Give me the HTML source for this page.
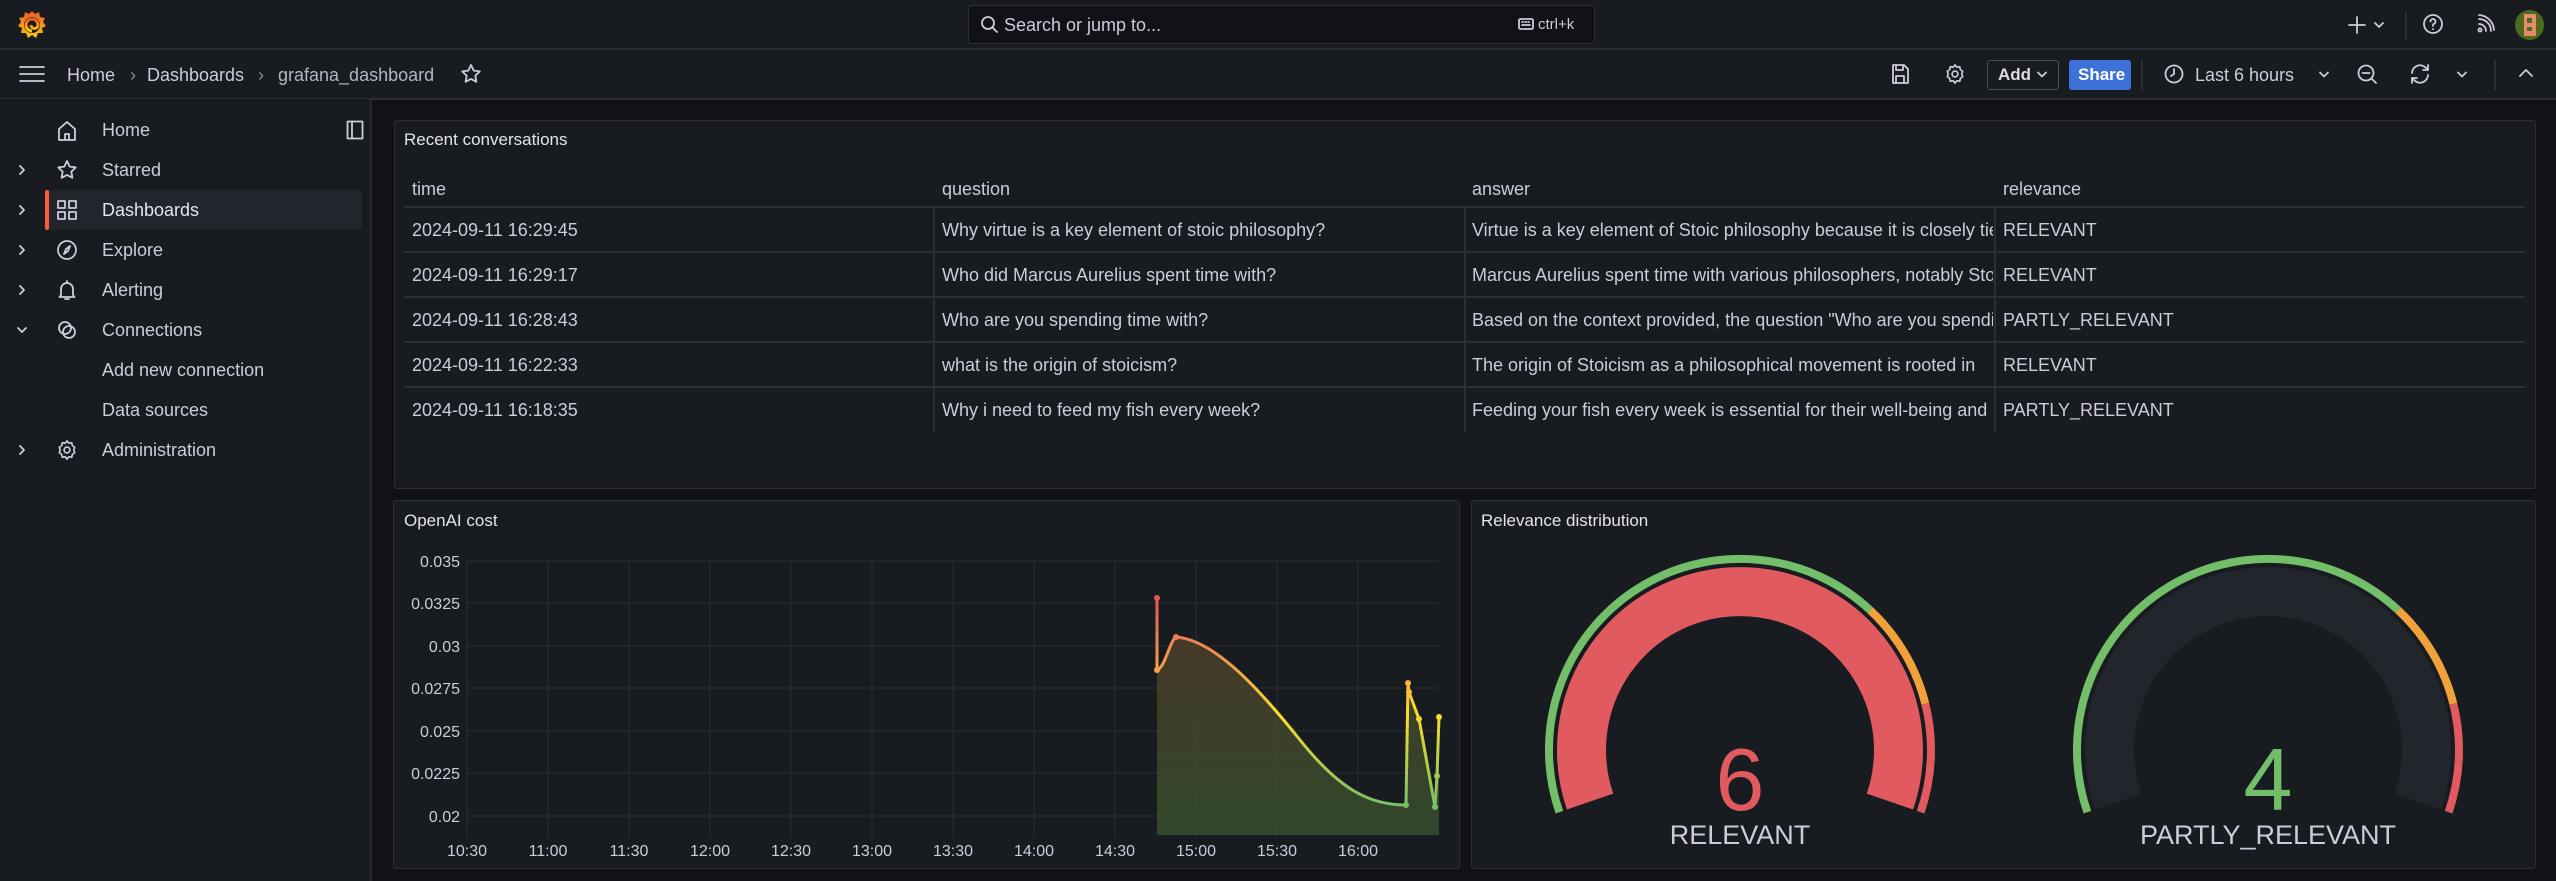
<!DOCTYPE html>
<html><head><meta charset="utf-8">
<style>
*{margin:0;padding:0;box-sizing:border-box}
body{width:2556px;height:881px;background:#111217;font-family:"Liberation Sans",sans-serif;color:#ccccdc;position:relative;overflow:hidden}
.a{position:absolute}
.bar{background:#181b1f;border-bottom:2px solid #2a2d33;left:0;width:2556px}
.t{position:absolute;white-space:nowrap;font-size:18px;line-height:20px}
.side{left:0;top:99px;width:372px;height:782px;background:#181b1f;border-right:2px solid #25282d}
.panel{background:#181b1f;border:1.5px solid #2c3036;border-radius:3px}
svg{position:absolute;overflow:visible}
.ic{stroke:#ccccdc;fill:none;stroke-width:1.8;stroke-linecap:round;stroke-linejoin:round}
.hr{position:absolute;height:1.5px;background:#2c3036}
.vr{position:absolute;width:1.5px;background:#2c3036}
</style></head><body>
<div class="a bar" style="top:0;height:50px"></div>
<svg style="left:16px;top:9px" width="32" height="32" viewBox="0 0 32 32">
<defs><linearGradient id="lg" x1="0" y1="1" x2="0" y2="0"><stop offset="0" stop-color="#fbca0a"/><stop offset="1" stop-color="#f05a28"/></linearGradient></defs>
<path d="M16 2 L19 5 L23 3 L24 8 L29 9 L27 13 L30 17 L26 19 L27 24 L22 24 L20 29 L16 26 L12 29 L10 24 L5 24 L6 19 L2 17 L5 13 L3 9 L8 8 L9 3 L13 5Z" fill="url(#lg)"/>
<circle cx="16" cy="16" r="8" fill="#181b1f"/>
<path d="M16 22 A6 6 0 1 1 22 16 A3.5 3.5 0 1 1 15 16" stroke="url(#lg)" stroke-width="3" fill="none"/>
</svg>
<div class="a" style="left:968px;top:5px;width:627px;height:39px;background:#111217;border:1.5px solid #2c3036;border-radius:3px"></div>
<svg style="left:980px;top:15px" width="20" height="20" viewBox="0 0 20 20"><circle cx="8" cy="8" r="6" class="ic"/><path d="M12.5 12.5 L17 17" class="ic"/></svg>
<div class="t" style="left:1004px;top:15px;color:#ccccdc">Search or jump to...</div>
<svg style="left:1518px;top:17px" width="16" height="14" viewBox="0 0 16 14"><rect x="1" y="2" width="14" height="10" rx="1.5" class="ic" stroke-width="1.4"/><path d="M4 5h1M7 5h1M10 5h1M4 8h8" class="ic" stroke-width="1.4"/></svg>
<div class="t" style="left:1538px;top:15px;font-size:15px;color:#ccccdc">ctrl+k</div>
<svg style="left:2347px;top:15px" width="20" height="20" viewBox="0 0 20 20"><path d="M10 2v16M2 10h16" class="ic" stroke-width="2"/></svg>
<svg style="left:2373px;top:20px" width="12" height="10" viewBox="0 0 12 10"><path d="M2 3l4 4 4-4" class="ic" stroke-width="1.5"/></svg>
<div class="vr" style="left:2405px;top:12px;height:28px"></div>
<svg style="left:2421px;top:12px" width="24" height="24" viewBox="0 0 24 24"><circle cx="12" cy="12" r="9" class="ic"/><path d="M9.5 9.5a2.5 2.5 0 1 1 3.5 2.3c-.7.3-1 .8-1 1.5v.7M12 17v.3" class="ic"/></svg>
<svg style="left:2476px;top:14px" width="20" height="20" viewBox="0 0 20 20"><circle cx="4" cy="16" r="1.6" class="ic"/><path d="M3 10a7 7 0 0 1 7 7M3 5a12 12 0 0 1 12 12M3 1a16 16 0 0 1 15 15" class="ic"/></svg>
<div class="a" style="left:2515px;top:10px;width:29px;height:30px;border-radius:50%;background:#4d6b1e;overflow:hidden">
<div class="a" style="left:9px;top:4px;width:12px;height:22px;background:#e58a6c"></div>
<div class="a" style="left:12px;top:8px;width:5px;height:5px;background:#4d6b1e"></div>
<div class="a" style="left:12px;top:17px;width:5px;height:4px;background:#4d6b1e"></div></div>
<div class="a bar" style="top:50px;height:50px"></div>
<svg style="left:18px;top:64px" width="28" height="20" viewBox="0 0 28 20"><path d="M2 3h24M2 10h24M2 17h24" class="ic" stroke-width="2.4"/></svg>
<div class="t" style="left:67px;top:65px">Home</div>
<div class="t" style="left:130px;top:65px;color:#8e8e9e">›</div>
<div class="t" style="left:147px;top:65px">Dashboards</div>
<div class="t" style="left:258px;top:65px;color:#8e8e9e">›</div>
<div class="t" style="left:278px;top:65px;color:#b5b5c5">grafana_dashboard</div>
<svg style="left:460px;top:63px" width="22" height="22" viewBox="0 0 22 22"><path d="M11 2l2.7 5.6 6.1.8-4.5 4.3 1.1 6.1L11 15.9l-5.4 2.9 1.1-6.1L2.2 8.4l6.1-.8z" class="ic"/></svg>
<svg style="left:1890px;top:63px" width="20" height="22" viewBox="0 0 20 22"><path d="M3 2h11l4 4v14H3z M6 2v5h7V2 M6 20v-7h8v7" class="ic"/></svg>
<svg style="left:1944px;top:63px" width="22" height="22" viewBox="0 0 24 24"><circle cx="12" cy="12" r="3.2" class="ic"/><path d="M12 2l2 2.6 3.2-.6.6 3.2L20.4 9l-1 3 1 3-2.6 1.8-.6 3.2-3.2-.6L12 22l-2-2.6-3.2.6-.6-3.2L3.6 15l1-3-1-3 2.6-1.8.6-3.2 3.2.6z" class="ic"/></svg>
<div class="a" style="left:1987px;top:60px;width:72px;height:30px;border:1.5px solid #4a4e56;border-radius:3px"></div>
<div class="t" style="left:1998px;top:65px;font-size:17px;font-weight:bold;color:#ddd">Add</div>
<svg style="left:2036px;top:70px" width="12" height="10" viewBox="0 0 12 10"><path d="M2 2.5l4 4 4-4" class="ic" stroke-width="1.6"/></svg>
<div class="a" style="left:2069px;top:60px;width:62px;height:30px;background:#3d71d9;border-radius:3px"></div>
<div class="t" style="left:2078px;top:65px;font-size:17px;font-weight:bold;color:#fff">Share</div>
<div class="vr" style="left:2141px;top:60px;height:30px"></div>
<svg style="left:2163px;top:63px" width="22" height="22" viewBox="0 0 22 22"><circle cx="11" cy="11" r="8.5" class="ic"/><path d="M11 6v5l-3 2" class="ic"/></svg>
<div class="t" style="left:2195px;top:65px;color:#ccccdc">Last 6 hours</div>
<svg style="left:2318px;top:70px" width="12" height="10" viewBox="0 0 12 10"><path d="M2 2.5l4 4 4-4" class="ic" stroke-width="1.5"/></svg>
<svg style="left:2356px;top:63px" width="24" height="24" viewBox="0 0 24 24"><circle cx="10" cy="10" r="7.5" class="ic"/><path d="M6.5 10h7M15.5 15.5L20 20" class="ic"/></svg>
<svg style="left:2408px;top:62px" width="24" height="24" viewBox="0 0 24 24"><path d="M4 11a8 8 0 0 1 14-5l2 2M20 13a8 8 0 0 1-14 5l-2-2M20 3v5h-5M4 21v-5h5" class="ic"/></svg>
<svg style="left:2456px;top:70px" width="12" height="10" viewBox="0 0 12 10"><path d="M2 2.5l4 4 4-4" class="ic" stroke-width="1.5"/></svg>
<div class="vr" style="left:2494px;top:60px;height:30px"></div>
<svg style="left:2518px;top:67px" width="16" height="12" viewBox="0 0 16 12"><path d="M2 9l6-6 6 6" class="ic" stroke-width="2"/></svg>
<div class="a side"></div>
<div class="a" style="left:45px;top:190px;width:317px;height:40px;background:#22252b;border-radius:2px"></div>
<div class="a" style="left:45px;top:190px;width:4px;height:40px;background:#f55f3e;border-radius:2px"></div>
<svg style="left:346px;top:120px" width="18" height="20" viewBox="0 0 18 20"><rect x="1.5" y="1.5" width="15" height="17" class="ic"/><path d="M6 1.5v17" class="ic"/></svg>
<svg style="left:56px;top:120px" width="22" height="22" viewBox="0 0 22 22"><path d="M3 20V9l8-7 8 7v11H3z M9 20v-6h4v6" class="ic"/></svg>
<svg style="left:56px;top:159px" width="22" height="22" viewBox="0 0 22 22"><path d="M11 2l2.7 5.6 6.1.8-4.5 4.3 1.1 6.1L11 15.9l-5.4 2.9 1.1-6.1L2.2 8.4l6.1-.8z" class="ic"/></svg>
<svg style="left:56px;top:199px" width="22" height="22" viewBox="0 0 22 22"><rect x="2" y="2" width="7" height="7" class="ic"/><rect x="13" y="2" width="7" height="7" class="ic"/><rect x="2" y="13" width="7" height="7" class="ic"/><rect x="13" y="13" width="7" height="7" class="ic"/></svg>
<svg style="left:56px;top:239px" width="22" height="22" viewBox="0 0 22 22"><circle cx="11" cy="11" r="9" class="ic"/><path d="M14 7l-2 5-4 3 2-5z" class="ic"/></svg>
<svg style="left:56px;top:279px" width="22" height="22" viewBox="0 0 22 22"><path d="M5 16V10a6 6 0 0 1 12 0v6l1.5 2h-15z M9 20h4 M11 2v2" class="ic"/></svg>
<svg style="left:56px;top:319px" width="22" height="22" viewBox="0 0 22 22"><circle cx="9" cy="9" r="6" class="ic"/><circle cx="13" cy="13" r="6" class="ic"/></svg>
<svg style="left:56px;top:439px" width="22" height="22" viewBox="0 0 24 24"><circle cx="12" cy="12" r="3.2" class="ic"/><path d="M12 2l2 2.6 3.2-.6.6 3.2L20.4 9l-1 3 1 3-2.6 1.8-.6 3.2-3.2-.6L12 22l-2-2.6-3.2.6-.6-3.2L3.6 15l1-3-1-3 2.6-1.8.6-3.2 3.2.6z" class="ic"/></svg>
<svg style="left:16px;top:163px" width="12" height="14" viewBox="0 0 12 14"><path d="M4 3l4 4-4 4" class="ic" stroke-width="1.5"/></svg>
<svg style="left:16px;top:203px" width="12" height="14" viewBox="0 0 12 14"><path d="M4 3l4 4-4 4" class="ic" stroke-width="1.5"/></svg>
<svg style="left:16px;top:243px" width="12" height="14" viewBox="0 0 12 14"><path d="M4 3l4 4-4 4" class="ic" stroke-width="1.5"/></svg>
<svg style="left:16px;top:283px" width="12" height="14" viewBox="0 0 12 14"><path d="M4 3l4 4-4 4" class="ic" stroke-width="1.5"/></svg>
<svg style="left:15px;top:324px" width="14" height="12" viewBox="0 0 14 12"><path d="M3 4l4 4 4-4" class="ic" stroke-width="1.5"/></svg>
<svg style="left:16px;top:443px" width="12" height="14" viewBox="0 0 12 14"><path d="M4 3l4 4-4 4" class="ic" stroke-width="1.5"/></svg>
<div class="t" style="left:102px;top:120px">Home</div>
<div class="t" style="left:102px;top:160px">Starred</div>
<div class="t" style="left:102px;top:200px;color:#e4e4ee">Dashboards</div>
<div class="t" style="left:102px;top:240px">Explore</div>
<div class="t" style="left:102px;top:280px">Alerting</div>
<div class="t" style="left:102px;top:320px">Connections</div>
<div class="t" style="left:102px;top:360px">Add new connection</div>
<div class="t" style="left:102px;top:400px">Data sources</div>
<div class="t" style="left:102px;top:440px">Administration</div>
<div class="a panel" style="left:394px;top:120px;width:2142px;height:369px"></div>
<div class="t" style="left:404px;top:130px;font-size:17px;color:#e4e4ee">Recent conversations</div>
<div class="t" style="left:412px;top:179px">time</div>
<div class="t" style="left:942px;top:179px">question</div>
<div class="t" style="left:1472px;top:179px">answer</div>
<div class="t" style="left:2003px;top:179px">relevance</div>
<div class="hr" style="left:404px;top:206px;width:2121px"></div>
<div class="hr" style="left:404px;top:251px;width:2121px"></div>
<div class="hr" style="left:404px;top:296px;width:2121px"></div>
<div class="hr" style="left:404px;top:341px;width:2121px"></div>
<div class="hr" style="left:404px;top:386px;width:2121px"></div>
<div class="vr" style="left:933px;top:207px;height:225px"></div>
<div class="vr" style="left:1464px;top:207px;height:225px"></div>
<div class="vr" style="left:1994px;top:207px;height:225px"></div>
<div class="a" style="left:412px;top:220px;width:515px;height:210px;overflow:hidden">
<div class="t" style="left:0;top:0">2024-09-11 16:29:45</div><div class="t" style="left:0;top:45px">2024-09-11 16:29:17</div><div class="t" style="left:0;top:90px">2024-09-11 16:28:43</div><div class="t" style="left:0;top:135px">2024-09-11 16:22:33</div><div class="t" style="left:0;top:180px">2024-09-11 16:18:35</div></div>
<div class="a" style="left:942px;top:220px;width:515px;height:210px;overflow:hidden">
<div class="t" style="left:0;top:0">Why virtue is a key element of stoic philosophy?</div><div class="t" style="left:0;top:45px">Who did Marcus Aurelius spent time with?</div><div class="t" style="left:0;top:90px">Who are you spending time with?</div><div class="t" style="left:0;top:135px">what is the origin of stoicism?</div><div class="t" style="left:0;top:180px">Why i need to feed my fish every week?</div></div>
<div class="a" style="left:1472px;top:220px;width:521px;height:210px;overflow:hidden">
<div class="t" style="left:0;top:0">Virtue is a key element of Stoic philosophy because it is closely tied</div><div class="t" style="left:0;top:45px">Marcus Aurelius spent time with various philosophers, notably Stoics</div><div class="t" style="left:0;top:90px">Based on the context provided, the question "Who are you spending</div><div class="t" style="left:0;top:135px">The origin of Stoicism as a philosophical movement is rooted in</div><div class="t" style="left:0;top:180px">Feeding your fish every week is essential for their well-being and</div></div>
<div class="a" style="left:2003px;top:220px;width:515px;height:210px;overflow:hidden">
<div class="t" style="left:0;top:0">RELEVANT</div><div class="t" style="left:0;top:45px">RELEVANT</div><div class="t" style="left:0;top:90px">PARTLY_RELEVANT</div><div class="t" style="left:0;top:135px">RELEVANT</div><div class="t" style="left:0;top:180px">PARTLY_RELEVANT</div></div>
<div class="a panel" style="left:393px;top:500px;width:1067px;height:369px"></div>
<div class="t" style="left:404px;top:511px;font-size:17px;color:#e4e4ee">OpenAI cost</div>
<svg style="left:0;top:0" width="2556" height="881">
<defs><linearGradient id="cg" gradientUnits="userSpaceOnUse" x1="0" y1="598" x2="0" y2="808"><stop offset="0" stop-color="#e0575b"/><stop offset="0.3" stop-color="#f2994a"/><stop offset="0.55" stop-color="#fade2a"/><stop offset="1" stop-color="#73bf69"/></linearGradient>
<linearGradient id="fg" x1="0" y1="0" x2="0" y2="1"><stop offset="0" stop-color="#5a3e2a" stop-opacity="0.75"/><stop offset="1" stop-color="#3c5a30" stop-opacity="0.7"/></linearGradient></defs>
<g stroke="#2a2e33" stroke-width="1">
<path d="M467 561H1439M467 603H1439M467 646H1439M467 688H1439M467 731H1439M467 773H1439M467 816H1439"/>
<path d="M467 561V838M548 561V838M629 561V838M710 561V838M791 561V838M872 561V838M953 561V838M1034 561V838M1115 561V838M1196 561V838M1277 561V838M1358 561V838"/>
</g>
<g fill="#ccccdc" font-size="16" font-family="Liberation Sans" text-anchor="end">
<text x="460" y="567">0.035</text><text x="460" y="609">0.0325</text><text x="460" y="652">0.03</text><text x="460" y="694">0.0275</text><text x="460" y="737">0.025</text><text x="460" y="779">0.0225</text><text x="460" y="822">0.02</text></g>
<g fill="#ccccdc" font-size="16" font-family="Liberation Sans" text-anchor="middle">
<text x="467" y="856">10:30</text><text x="548" y="856">11:00</text><text x="629" y="856">11:30</text><text x="710" y="856">12:00</text><text x="791" y="856">12:30</text><text x="872" y="856">13:00</text><text x="953" y="856">13:30</text><text x="1034" y="856">14:00</text><text x="1115" y="856">14:30</text><text x="1196" y="856">15:00</text><text x="1277" y="856">15:30</text><text x="1358" y="856">16:00</text></g>
<path d="M1157 598 L1157 670 C1165 668 1170 640 1176 637 C1215 640 1260 690 1300 740 C1340 790 1370 805 1406 805 L1408 683 L1409 692 L1419 719 L1435 807 L1437 776 L1439 717 L1439 835 L1157 835Z" fill="url(#fg)"/>
<path d="M1157 598 L1157 670 C1165 668 1170 640 1176 637 C1215 640 1260 690 1300 740 C1340 790 1370 805 1406 805 L1408 683 L1409 692 L1419 719 L1435 807 L1437 776 L1439 717" fill="none" stroke="url(#cg)" stroke-width="3" stroke-linejoin="round"/>
<g fill="url(#cg)"><circle cx="1157" cy="598" r="3"/><circle cx="1157" cy="670" r="3"/><circle cx="1176" cy="637" r="3"/><circle cx="1406" cy="805" r="3"/><circle cx="1408" cy="683" r="3"/><circle cx="1409" cy="692" r="3"/><circle cx="1419" cy="719" r="3"/><circle cx="1435" cy="807" r="3"/><circle cx="1437" cy="776" r="3"/><circle cx="1439" cy="717" r="3"/></g>
</svg>
<div class="a panel" style="left:1471px;top:500px;width:1065px;height:369px"></div>
<div class="t" style="left:1481px;top:511px;font-size:17px;color:#e4e4ee">Relevance distribution</div>
<svg style="left:0;top:0" width="2556" height="881" font-family="Liberation Sans">
<g transform="translate(1740,750)">
<path d="M-149.9 51.6 A158.5 158.5 0 1 1 149.9 51.6" fill="none" stroke="#e05a60" stroke-width="49"/>
<path d="M-180.6 62.2 A191 191 0 0 1 130.3 -139.7" fill="none" stroke="#73bf69" stroke-width="8"/>
<path d="M130.3 -139.7 A191 191 0 0 1 185.3 -46.2" fill="none" stroke="#f2a03a" stroke-width="8"/>
<path d="M185.3 -46.2 A191 191 0 0 1 180.6 62.2" fill="none" stroke="#e05a60" stroke-width="8"/>
<text x="0" y="60" text-anchor="middle" font-size="88" fill="#e05a60">6</text>
<text x="0" y="94" text-anchor="middle" font-size="27" fill="#ccccdc">RELEVANT</text>
</g>
<g transform="translate(2268,750)">
<path d="M-149.9 51.6 A158.5 158.5 0 1 1 149.9 51.6" fill="none" stroke="#22252b" stroke-width="49"/>
<path d="M-180.6 62.2 A191 191 0 0 1 130.3 -139.7" fill="none" stroke="#73bf69" stroke-width="8"/>
<path d="M130.3 -139.7 A191 191 0 0 1 185.3 -46.2" fill="none" stroke="#f2a03a" stroke-width="8"/>
<path d="M185.3 -46.2 A191 191 0 0 1 180.6 62.2" fill="none" stroke="#e05a60" stroke-width="8"/>
<text x="0" y="60" text-anchor="middle" font-size="88" fill="#73bf69">4</text>
<text x="0" y="94" text-anchor="middle" font-size="27" fill="#ccccdc">PARTLY_RELEVANT</text>
</g>
</svg>
</body></html>
